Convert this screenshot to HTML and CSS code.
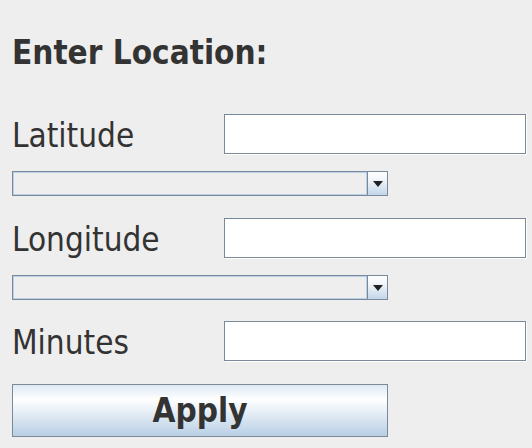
FILE: index.html
```html
<!DOCTYPE html>
<html>
<head>
<meta charset="utf-8">
<link rel="stylesheet" href="styles.css">
</head>
<body>
<div class="panel">
  <div class="title">Enter Location:</div>
  <div class="row">
    <div class="label">Latitude</div>
    <div class="field"></div>
  </div>
  <div class="combo"><div class="combo-text"></div><div class="combo-btn"><span class="arrow"></span></div></div>
  <div class="row gap-top">
    <div class="label">Longitude</div>
    <div class="field"></div>
  </div>
  <div class="combo"><div class="combo-text"></div><div class="combo-btn"><span class="arrow"></span></div></div>
  <div class="row gap-top2">
    <div class="label">Minutes</div>
    <div class="field"></div>
  </div>
  <div class="button">Apply</div>
</div>
</body>
</html>
```
FILE: styles.css
```css
html, body {
  margin: 0;
  padding: 0;
  background: #eeeeee;
}
.panel {
  padding: 0 6px 0 12px;
  display: flex;
  flex-direction: column;
  font-family: "DejaVu Sans", sans-serif;
  font-stretch: condensed;
  color: #333333;
}
.title {
  font-weight: bold;
  font-size: 33px;
  line-height: 40px;
  height: 40px;
  margin-top: 33px;
  margin-bottom: 41px;
}
.row {
  display: flex;
  align-items: center;
  height: 40px;
}
.gap-top { margin-top: 22px; }
.gap-top2 { margin-top: 21px; }
.label {
  width: 212px;
  font-size: 33px;
  line-height: 40px;
  padding-top: 3px;
}
.field {
  box-sizing: border-box;
  width: 302px;
  height: 40px;
  background: #ffffff;
  border: 1px solid #7a8a99;
  box-shadow: 1px 1px 0 #ffffff;
}
.combo {
  box-sizing: border-box;
  margin-top: 17px;
  width: 376px;
  height: 25px;
  border: 1px solid #7a8a99;
  display: flex;
}
.combo-text {
  flex: 1;
  border: 1px solid #b8cfe5;
  background: #eeeeee;
}
.combo-btn {
  width: 19px;
  border-left: 1px solid #7a8a99;
  background: linear-gradient(to bottom, #ffffff 0%, #f3f7fb 30%, #c4d6eb 100%);
  display: flex;
  align-items: center;
  justify-content: center;
}
.arrow {
  width: 0;
  height: 0;
  border-left: 5px solid transparent;
  border-right: 5px solid transparent;
  border-top: 6px solid #222222;
  margin-top: 1px;
}
.button {
  box-sizing: border-box;
  margin-top: 23px;
  width: 376px;
  height: 53px;
  border: 1px solid #7a8a99;
  background: linear-gradient(to bottom, #dde8f3 0%, #ffffff 28%, #b8cfe5 100%);
  font-weight: bold;
  font-size: 33px;
  line-height: 51px;
  text-align: center;
}
```
